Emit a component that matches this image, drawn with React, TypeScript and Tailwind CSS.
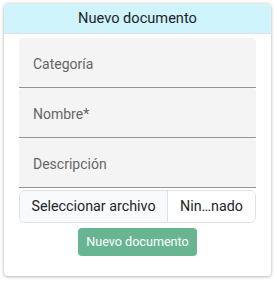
import React from "react";

export default function App() {
  const fields = ["Categoría", "Nombre*", "Descripción"];
  return (
    <div className="w-[277px] h-[281px] bg-white pt-[4px] px-[4px]" style={{ fontFamily: "Roboto, 'Liberation Sans', sans-serif" }}>
      <div className="w-[267px] h-[272px] bg-white rounded-[4px] shadow-[0_1px_3px_rgba(0,0,0,0.25),0_-1px_4px_rgba(0,0,0,0.12)] overflow-hidden flex flex-col">
        <div className="h-[30px] bg-[#cff4fc] border-b border-[#dee2e6] flex items-center justify-center text-[14.6px] text-[#212529]">
          Nuevo documento
        </div>
        <div className="px-[15px] pt-[4px] flex flex-col">
          {fields.map((f) => (
            <div
              key={f}
              className="h-[50px] bg-[#f4f4f4] rounded-t-[4px] border-b border-[#949494] flex items-center pl-[14px] pt-[3px] text-[14px] text-[#666666]"
            >
              {f}
            </div>
          ))}
          <div className="mt-[2px] h-[33px] border border-[#dee2e6] rounded-[6px] flex overflow-hidden text-[14.3px] text-[#212529]">
            <div className="w-[148px] bg-[#f8f9fa] border-r border-[#dee2e6] flex items-center justify-center">
              Seleccionar archivo
            </div>
            <div className="flex-1 flex items-center justify-center bg-white">Nin…nado</div>
          </div>
          <div className="flex justify-center mt-[5px]">
            <button className="w-[119px] h-[28px] bg-[#68b592] rounded-[4px] text-white text-[12.6px]">
              Nuevo documento
            </button>
          </div>
        </div>
      </div>
    </div>
  );
}
